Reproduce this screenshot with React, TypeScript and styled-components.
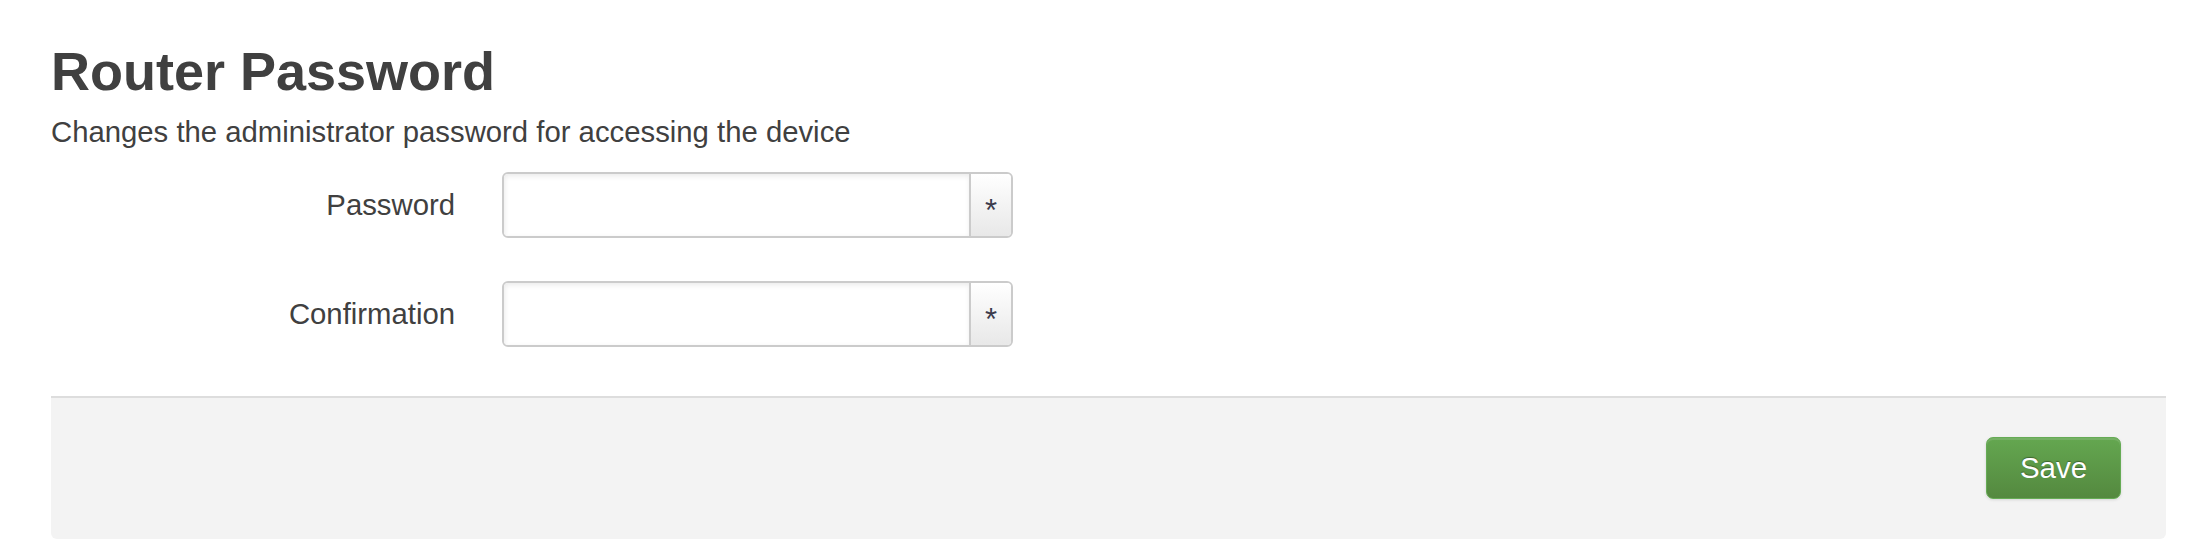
import React from "react";
import styled, { createGlobalStyle } from "styled-components";

const GlobalStyle = createGlobalStyle`
  html, body {
    margin: 0;
    padding: 0;
    background: #ffffff;
  }
  body {
    font-family: "Liberation Sans", Arial, sans-serif;
    color: #404040;
  }
`;

const Page = styled.div`
  padding: 0 43px 0 51px;
`;

const Title = styled.h2`
  margin: 41px 0 0;
  font-size: 54px;
  line-height: 60px;
  font-weight: bold;
  color: #404040;
`;

const Description = styled.div`
  margin-top: 13px;
  font-size: 29.3px;
  line-height: 36px;
  color: #404040;
`;

const Form = styled.div`
  display: flex;
  flex-direction: column;
  gap: 43px;
  margin-top: 22px;
`;

const Row = styled.div`
  display: grid;
  grid-template-columns: 404px 511px;
  column-gap: 47px;
  align-items: center;
`;

const Label = styled.label`
  text-align: right;
  font-size: 29.3px;
  line-height: 36px;
  color: #404040;
`;

const Group = styled.div`
  display: flex;
  height: 66px;
  box-sizing: border-box;
  border: 2px solid #cbcbcb;
  border-radius: 6px;
  overflow: hidden;
  background: #fff;
`;

const Field = styled.input`
  flex: 1;
  min-width: 0;
  border: none;
  outline: none;
  padding: 0 12px;
  font-size: 29px;
  font-family: "Liberation Sans", Arial, sans-serif;
  background: #fff;
  box-shadow: inset 0 3px 5px rgba(0, 0, 0, 0.06), inset 2px 0 4px rgba(0, 0, 0, 0.03);
`;

const Addon = styled.div`
  width: 42px;
  flex: none;
  border-left: 2px solid #cbcbcb;
  background: linear-gradient(#ffffff, #e8e8e8);
  display: flex;
  justify-content: center;
  align-items: center;
  padding-top: 11px;
  box-sizing: border-box;
  font-size: 31px;
  line-height: 31px;
  color: #3c3c4c;
`;

const Footer = styled.div`
  margin-top: 49px;
  border-top: 2px solid #dddddd;
  background: #f3f3f3;
  border-radius: 0 0 6px 6px;
  padding: 39px 45px 40px;
  display: flex;
  justify-content: flex-end;
`;

const SaveButton = styled.button`
  width: 135px;
  height: 62px;
  box-sizing: border-box;
  border: 1px solid #66ab55;
  border-radius: 7px;
  background: linear-gradient(#64a750, #54893f);
  box-shadow: inset 0 2px 0 rgba(255, 255, 255, 0.12), 0 1px 3px rgba(0, 0, 0, 0.12);
  color: #ffffff;
  font-family: "Liberation Sans", Arial, sans-serif;
  font-size: 29.5px;
  text-shadow: 0 -1px 1px rgba(0, 0, 0, 0.35);
  cursor: pointer;
  padding: 0;
`;

const fields = ["Password", "Confirmation"];

export default function App() {
  return (
    <>
      <GlobalStyle />
      <Page>
        <Title>Router Password</Title>
        <Description>Changes the administrator password for accessing the device</Description>
        <Form>
          {fields.map((f) => (
            <Row key={f}>
              <Label>{f}</Label>
              <Group>
                <Field type="password" />
                <Addon>*</Addon>
              </Group>
            </Row>
          ))}
        </Form>
        <Footer>
          <SaveButton>Save</SaveButton>
        </Footer>
      </Page>
    </>
  );
}
